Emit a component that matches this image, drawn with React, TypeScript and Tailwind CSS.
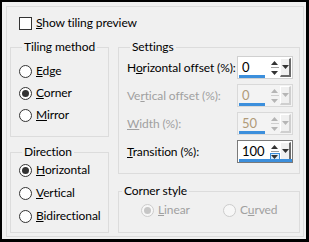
import React from "react";

const font = { fontFamily: 'Lato, "Noto Sans", sans-serif' };

function Radio({ checked, disabled }: { checked?: boolean; disabled?: boolean }) {
  return (
    <span
      className={
        "flex h-[13px] w-[13px] shrink-0 items-center justify-center rounded-full border " +
        (disabled ? "border-[#cccccc] bg-[#f7f7f7]" : "border-[#333333] bg-white")
      }
    >
      {checked ? (
        <span className={"h-[7px] w-[7px] rounded-full " + (disabled ? "bg-[#c6c6c6]" : "bg-[#333333]")} />
      ) : null}
    </span>
  );
}

function RadioRow({
  label,
  checked,
  disabled,
  w,
}: {
  label: React.ReactNode;
  checked?: boolean;
  disabled?: boolean;
  w?: string;
}) {
  return (
    <div className={"flex items-center gap-[4px] " + (w ?? "")}>
      <Radio checked={checked} disabled={disabled} />
      <span className={"whitespace-nowrap " + (disabled ? "text-[#a0a0a0]" : "text-black")}>{label}</span>
    </div>
  );
}

function Triangle({ up, color }: { up?: boolean; color: string }) {
  return (
    <svg width="7" height="4" viewBox="0 0 7 4">
      {up ? <polygon points="0,4 7,4 3.5,0" fill={color} /> : <polygon points="0,0 7,0 3.5,4" fill={color} />}
    </svg>
  );
}

function Spin({ value, disabled, focused }: { value: string; disabled?: boolean; focused?: boolean }) {
  const arrow = disabled ? "#b5b5b5" : "#333333";
  return (
    <div
      className={
        "relative flex h-[23px] w-[56px] shrink-0 border " +
        (focused ? "border-[#7a7a7a] bg-white" : disabled ? "border-[#d9d9d9] bg-[#f3f3f3]" : "border-[#d0d0d0] bg-white")
      }
    >
      <div className="flex w-[31px] items-center pl-[4px]">
        <span className={"text-[13px] leading-none " + (disabled ? "text-[#b09a78]" : "text-black")}>{value}</span>
      </div>
      <div className="flex w-[11px] flex-col items-center justify-center gap-[1px] py-[2px]">
        <div className="flex h-[7px] w-[10px] items-center justify-center">
          <Triangle up color={arrow} />
        </div>
        <div className={"h-px w-[8px] " + (disabled ? "bg-[#cfcfcf]" : "bg-[#a0a0a0]")} />
        <div
          className={
            "flex h-[7px] w-[10px] items-center justify-center " +
            (focused ? "border border-[#3c8fdc] bg-[#d9ebf9]" : "")
          }
        >
          <Triangle color={arrow} />
        </div>
      </div>
      <div className="flex flex-1 items-center py-[1px] pr-[1px]">
        <div
          className={
            "flex h-full w-full items-center justify-center border-b-2 border-r-2 border-l border-t " +
            (disabled
              ? "border-b-[#cfcfcf] border-r-[#cfcfcf] border-l-white border-t-white bg-[#f0f0f0]"
              : "border-b-[#6a6a6a] border-r-[#6a6a6a] border-l-white border-t-white bg-[#f0f0f0]")
          }
        >
          <Triangle color={arrow} />
        </div>
      </div>
      <div
        className={
          "absolute bottom-0 left-[1px] h-[3px] bg-[#3c8fdc] " + (focused ? "right-[0px]" : "w-[26px]")
        }
      />
    </div>
  );
}

function SettingRow({
  label,
  value,
  disabled,
  focused,
}: {
  label: React.ReactNode;
  value: string;
  disabled?: boolean;
  focused?: boolean;
}) {
  return (
    <div className="flex items-center justify-between">
      <span className={"whitespace-nowrap " + (disabled ? "text-[#a0a0a0]" : "text-black")}>{label}</span>
      <Spin value={value} disabled={disabled} focused={focused} />
    </div>
  );
}

export default function App() {
  return (
    <div
      className="h-[242px] w-[309px] border-b-[3px] border-l-2 border-r-[3px] border-t-2 border-black bg-[#f0f0f0] text-[12px] leading-[16px] tracking-[-0.1px]"
      style={font}
    >
      <div className="ml-[4px] mt-[4px] h-[231px] w-[298px] border border-[#dcdcdc] pl-[3px] pt-[8px]">
        <div className="ml-[9px] flex items-center gap-[4px]">
          <span className="h-[13px] w-[13px] border border-[#333333] bg-white" />
          <span className="whitespace-nowrap">
            <u>S</u>how tiling preview
          </span>
        </div>
        <div className="mt-[8px] flex gap-[9px]">
          <div className="flex w-[99px] flex-col gap-[5px]">
            <fieldset className="h-[98px] border border-[#dcdcdc] pl-[8px]">
              <legend className="ml-[3px] px-[2px]">Tiling method</legend>
              <div className="mt-[8px] flex flex-col gap-[6px]">
                <RadioRow label={<><u>E</u>dge</>} />
                <RadioRow label={<><u>C</u>orner</>} checked />
                <RadioRow label={<><u>M</u>irror</>} />
              </div>
            </fieldset>
            <fieldset className="mt-[2px] h-[89px] border border-[#dcdcdc] pl-[8px]">
              <legend className="ml-[3px] px-[2px]">Direction</legend>
              <div className="mt-[2px] flex flex-col gap-[7px]">
                <RadioRow label={<><u>H</u>orizontal</>} checked />
                <RadioRow label={<><u>V</u>ertical</>} />
                <RadioRow label={<><u>B</u>idirectional</>} />
              </div>
            </fieldset>
          </div>
          <div className="flex w-[182px] flex-col gap-[9px]">
            <fieldset className="h-[135px] border border-[#dcdcdc] pl-[8px] pr-[6px]">
              <legend className="ml-[3px] px-[2px]">Settings</legend>
              <div className="mt-[1px] flex flex-col gap-[5px]">
                <SettingRow label={<>H<u>o</u>rizontal offset (%):</>} value="0" />
                <SettingRow label={<>Ve<u>r</u>tical offset (%):</>} value="0" disabled />
                <SettingRow label={<><u>W</u>idth (%):</>} value="50" disabled />
                <SettingRow label={<><u>T</u>ransition (%):</>} value="100" focused />
              </div>
            </fieldset>
            <fieldset className="h-[50px] border border-[#dcdcdc]">
              <legend className="ml-[3px] px-[2px]">Corner style</legend>
              <div className="ml-[22px] mt-[3px] flex">
                <RadioRow label={<><u>L</u>inear</>} checked disabled w="w-[82px]" />
                <RadioRow label={<>C<u>u</u>rved</>} disabled />
              </div>
            </fieldset>
          </div>
        </div>
      </div>
    </div>
  );
}
